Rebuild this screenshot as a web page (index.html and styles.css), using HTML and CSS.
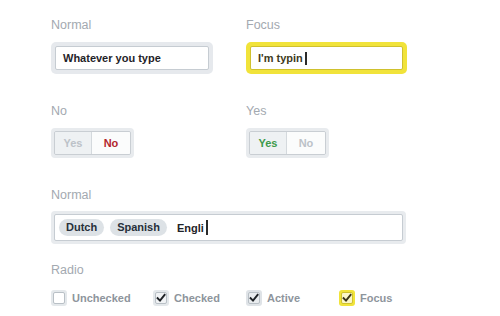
FILE: index.html
```html
<!DOCTYPE html>
<html>
<head>
<meta charset="utf-8">
<link rel="stylesheet" href="styles.css">
</head>
<body>
<div class="page">
  <div class="row">
    <div class="field">
      <div class="label">Normal</div>
      <div class="input"><div class="input-inner">Whatever you type</div></div>
    </div>
    <div class="field">
      <div class="label">Focus</div>
      <div class="input focus"><div class="input-inner">I'm typin<span class="caret"></span></div></div>
    </div>
  </div>

  <div class="row row-toggles">
    <div class="field">
      <div class="label">No</div>
      <div class="toggle"><div class="toggle-inner">
        <div class="seg seg-l muted">Yes</div>
        <div class="seg seg-r no">No</div>
      </div></div>
    </div>
    <div class="field">
      <div class="label">Yes</div>
      <div class="toggle"><div class="toggle-inner">
        <div class="seg seg-l yes">Yes</div>
        <div class="seg seg-r muted">No</div>
      </div></div>
    </div>
  </div>

  <div class="section-tags">
    <div class="label label-tags">Normal</div>
    <div class="tags"><div class="tags-inner">
      <span class="pill">Dutch</span>
      <span class="pill">Spanish</span>
      <span class="typed">Engli<span class="caret"></span></span>
    </div></div>
  </div>

  <div class="section-checks">
    <div class="label label-checks">Radio</div>
    <div class="checks">
      <div class="check">
        <div class="box"><div class="box-inner"></div></div>
        <span>Unchecked</span>
      </div>
      <div class="check">
        <div class="box"><div class="box-inner checked"><svg width="10" height="10" viewBox="0 0 10 10"><path d="M1.6 5.2 L4 7.6 L8.6 1.8" fill="none" stroke="#1e2226" stroke-width="1.9" stroke-linecap="square"/></svg></div></div>
        <span>Checked</span>
      </div>
      <div class="check">
        <div class="box box-active"><div class="box-inner checked"><svg width="10" height="10" viewBox="0 0 10 10"><path d="M1.6 5.2 L4 7.6 L8.6 1.8" fill="none" stroke="#1e2226" stroke-width="1.9" stroke-linecap="square"/></svg></div></div>
        <span>Active</span>
      </div>
      <div class="check">
        <div class="box box-focus"><div class="box-inner checked"><svg width="10" height="10" viewBox="0 0 10 10"><path d="M1.6 5.2 L4 7.6 L8.6 1.8" fill="none" stroke="#3a3518" stroke-width="1.9" stroke-linecap="square"/></svg></div></div>
        <span>Focus</span>
      </div>
    </div>
  </div>
</div>
</body>
</html>
```
FILE: styles.css
```css
* { box-sizing: border-box; }
html, body { margin: 0; background: #ffffff; }
.page {
  padding: 18px 0 0 51px;
  font-family: "Liberation Sans", Arial, sans-serif;
}
.row {
  display: grid;
  grid-template-columns: 195px 161px;
}
.label {
  font-size: 12.5px;
  line-height: 15px;
  color: #a3a9b0;
  margin-bottom: 9px;
}
.input {
  width: 162px;
  height: 32px;
  padding: 4px;
  background: #e6e9ed;
  border-radius: 5px;
}
.input-inner {
  height: 100%;
  border: 1px solid #c6ccd2;
  border-radius: 2px;
  background: #ffffff;
  padding-left: 7px;
  display: flex;
  align-items: center;
  font-size: 11px;
  font-weight: bold;
  color: #1f2328;
}
.focus { background: #f1e33a; width: 161px; }
.focus .input-inner { border-color: #cfc12e; color: #3e3a1c; }
.caret {
  display: inline-block;
  width: 2px;
  height: 13px;
  background: #2a2a2a;
  margin-left: 2px;
}
.row-toggles { margin-top: 30px; }
.toggle {
  width: 83px;
  height: 30px;
  padding: 3px;
  background: #e8ebee;
  border-radius: 4px;
}
.toggle-inner {
  display: flex;
  height: 100%;
  border: 1px solid #c9ced3;
  border-radius: 2px;
  overflow: hidden;
}
.seg {
  display: flex;
  align-items: center;
  justify-content: center;
  font-size: 11px;
  font-weight: bold;
}
.seg-l {
  width: 37px;
  background: #eef1f3;
  border-right: 1px solid #d4d9dd;
}
.seg-r { flex: 1; background: #fbfcfc; }
.muted { color: #bcc2c8; }
.no { color: #b3262d; }
.yes { color: #3d9a4b; }
.section-tags { margin-top: 30px; }
.label-tags { margin-bottom: 8px; }
.tags {
  width: 355px;
  height: 33px;
  padding: 3px;
  background: #e8ebee;
  border-radius: 4px;
}
.tags-inner {
  height: 100%;
  border: 1px solid #c6ccd2;
  border-radius: 2px;
  background: #ffffff;
  display: flex;
  align-items: center;
  gap: 6px;
  padding-left: 4px;
  font-size: 11px;
  font-weight: bold;
}
.pill {
  height: 17px;
  line-height: 17px;
  padding: 0 7px;
  border-radius: 9px;
  background: #dde2e6;
  color: #27303a;
}
.typed {
  margin-left: 4px;
  color: #1f2328;
  display: flex;
  align-items: center;
}
.typed .caret { height: 15px; }
.section-checks { margin-top: 19px; }
.label-checks { margin-bottom: 12px; }
.checks {
  display: grid;
  grid-template-columns: 102px 93px 93px auto;
  align-items: center;
}
.check {
  display: flex;
  align-items: center;
  gap: 5px;
  font-size: 11px;
  font-weight: bold;
  color: #8e959c;
}
.box {
  width: 16px;
  height: 16px;
  padding: 2px;
  background: #e4e8eb;
  border-radius: 3px;
}
.box-inner {
  width: 100%;
  height: 100%;
  border: 1px solid #b9c0c6;
  border-radius: 2px;
  background: #ffffff;
  display: flex;
  align-items: center;
  justify-content: center;
}
.box-inner.checked { background: #f1f3f5; }
.box-active { background: #dfe3e7; }
.box-active .box-inner { background: #e9ecef; }
.box-focus { background: #f1e33a; }
.box-focus .box-inner { border-color: #cfc12e; background: #fbf6c8; }
```
